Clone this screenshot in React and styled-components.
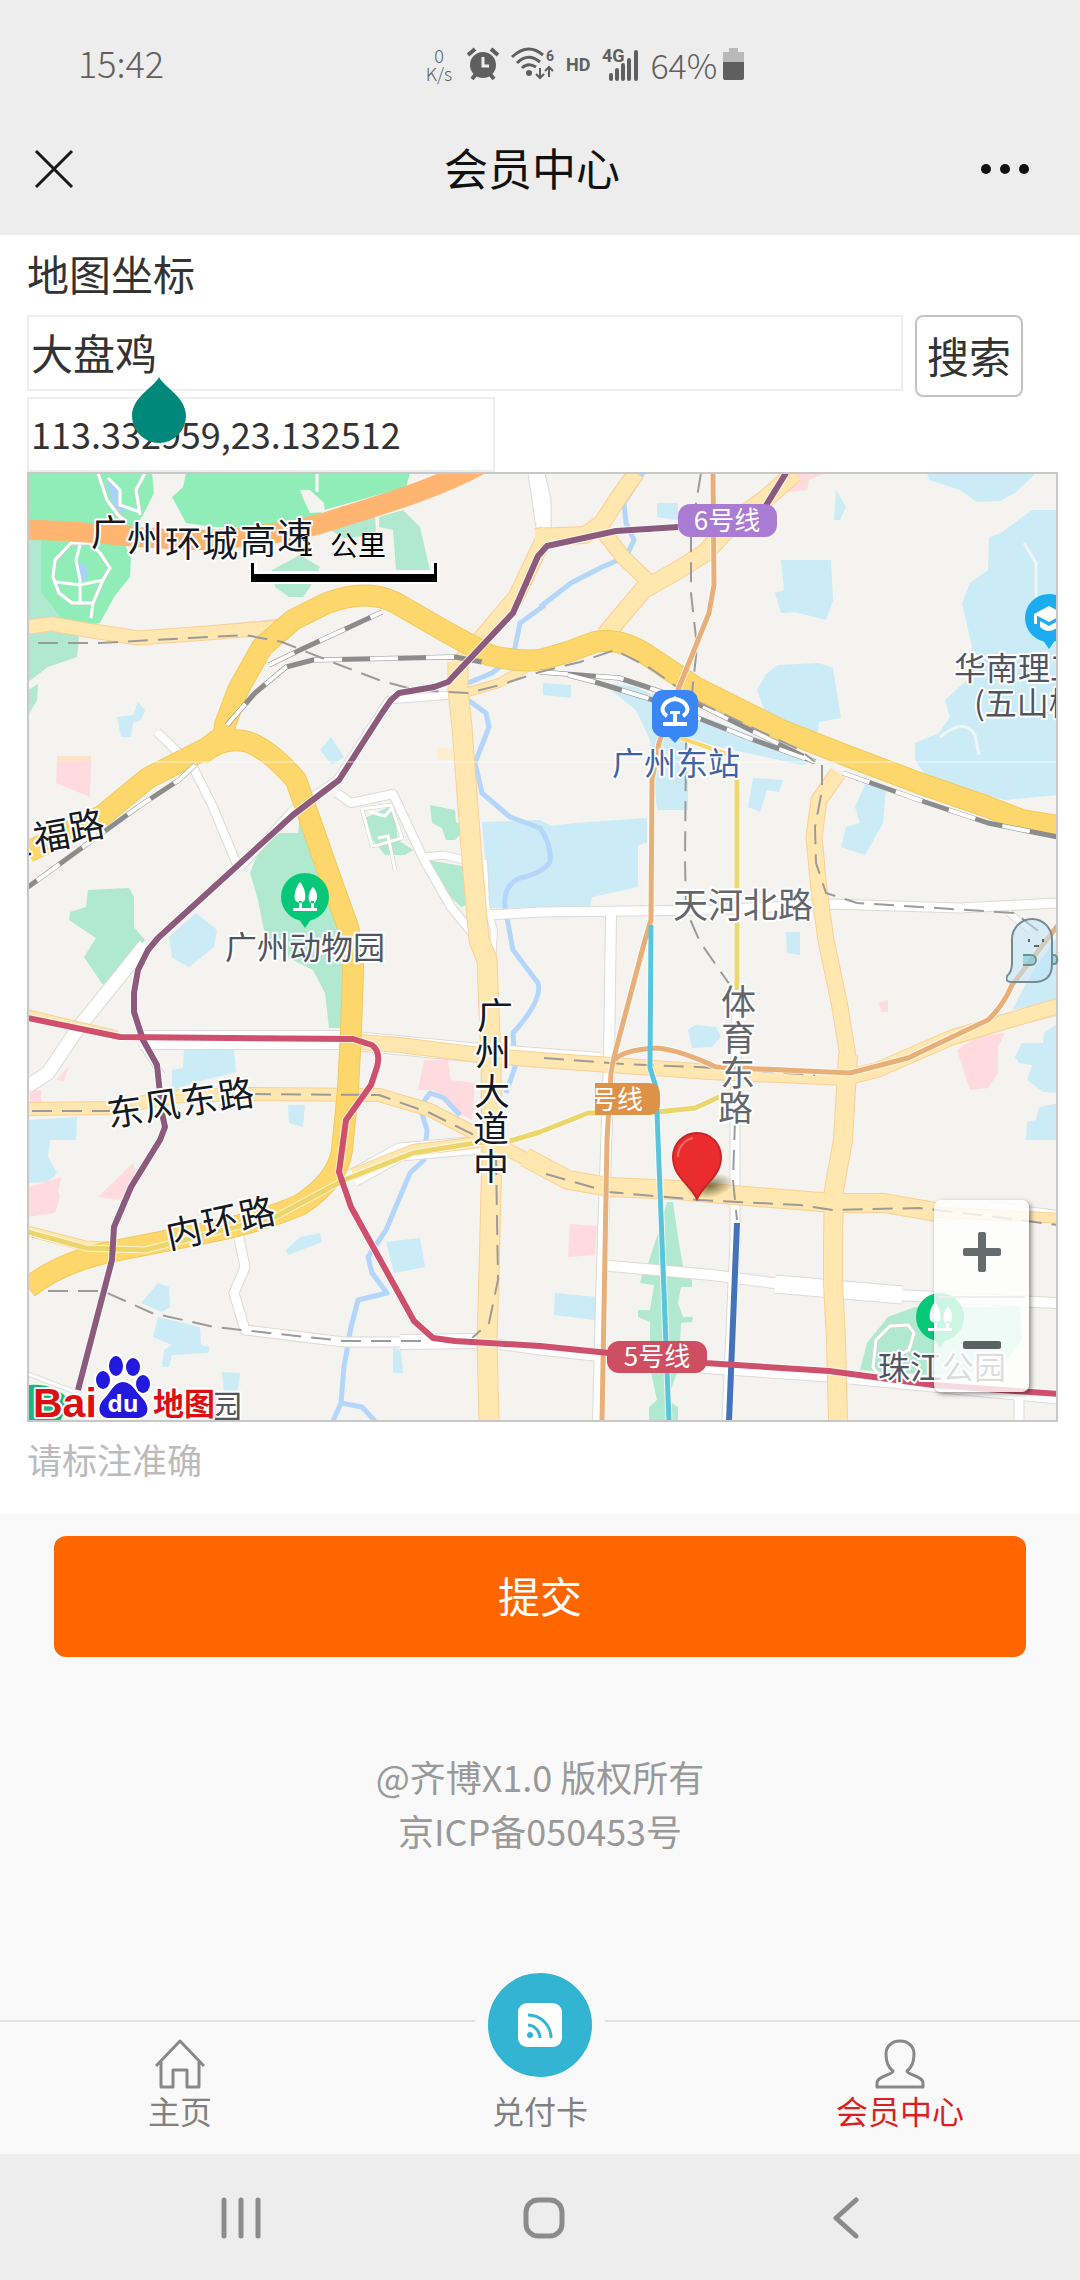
import React, { useState } from 'react'
import styled, { createGlobalStyle } from 'styled-components'

const App = () => {
    const [keyword, setKeyword] = useState('大盘鸡')
    const [point, setPoint] = useState('113.332959,23.132512')

    return (
        <>
            <GlobalStyle />
            <Page>
                <Header>
                    <StatusBar>
                        <Clock>15:42</Clock>
                        <Speed><span>0</span><span>K/s</span></Speed>
                        <AlarmIcon />
                        <WifiIcon />
                        <HdMark>HD</HdMark>
                        <SignalIcon />
                        <Battery>64%<BatteryIcon /></Battery>
                    </StatusBar>
                    <TitleBar>
                        <IconButton aria-label="关闭">
                            <svg width="40" height="40" viewBox="0 0 40 40" stroke="#181818" strokeWidth="3">
                                <path d="M2 2 L38 38 M38 2 L2 38" />
                            </svg>
                        </IconButton>
                        <Title>会员中心</Title>
                        <IconButton aria-label="更多">
                            <svg width="50" height="12" viewBox="0 0 50 12" fill="#111">
                                <circle cx="6" cy="6" r="5" />
                                <circle cx="25" cy="6" r="5" />
                                <circle cx="44" cy="6" r="5" />
                            </svg>
                        </IconButton>
                    </TitleBar>
                </Header>

                <Form>
                    <Label htmlFor="keyword">地图坐标</Label>
                    <SearchRow>
                        <KeywordBox>
                            <TextInput id="keyword" value={keyword} onChange={(e) => setKeyword(e.target.value)} />
                            <CursorHandle viewBox="0 0 54 66">
                                <path d="M27 0 C32 10 54 20 54 39 A27 27 0 0 1 0 39 C0 20 22 10 27 0Z" fill="#00897b" />
                            </CursorHandle>
                        </KeywordBox>
                        <SearchButton type="button">搜索</SearchButton>
                    </SearchRow>
                    <PointInput aria-label="坐标" value={point} onChange={(e) => setPoint(e.target.value)} />
                    <MapFrame>
                        <CityMap />
                        <ZoomControl>
                            <ZoomButton aria-label="放大">
                                <svg width="38" height="40" viewBox="0 0 38 40" fill="#666b6d">
                                    <rect x="15" y="0" width="8" height="40" rx="2" />
                                    <rect x="0" y="16" width="38" height="8" rx="2" />
                                </svg>
                            </ZoomButton>
                            <ZoomButton aria-label="缩小">
                                <svg width="38" height="40" viewBox="0 0 38 40" fill="#5c6164">
                                    <rect x="0" y="16" width="38" height="8" rx="2" />
                                </svg>
                            </ZoomButton>
                        </ZoomControl>
                        <Mascot viewBox="0 0 56 66">
                            <path d="M6 21 A20 20 0 0 1 46 21 V46 Q46 64 28 64 H5 Q-1 64 1 58 Q6 54 6 45Z" fill="#bfe4f8" fillOpacity="0.55" stroke="#788792" strokeWidth="2" />
                            <path d="M17 37 h8 a5 5 0 0 1 0 10 h-8 M47 37 h2 a4 5 0 0 1 0 9 h-2" fill="#79c9d2" fillOpacity="0.6" stroke="#6a9296" strokeWidth="2" />
                            <path d="M23 21 v3 M37 21 v3 M28 28 h5" stroke="#59666e" strokeWidth="2" />
                        </Mascot>
                    </MapFrame>
                    <Hint>请标注准确</Hint>
                </Form>

                <SubmitButton type="submit">提交</SubmitButton>
                <Copyright>
                    <p>@齐博X1.0 版权所有</p>
                    <p>京ICP备050453号</p>
                </Copyright>

                <TabBar>
                    <Tab href="#home">
                        <svg width="50" height="50" viewBox="0 0 50 50" fill="none" stroke="#888" strokeWidth="3" strokeLinejoin="round">
                            <path d="M1 27 L25 2 L49 27 M6 23 V48 H18 V31 H32 V48 H44 V23" />
                        </svg>
                        主页
                    </Tab>
                    <Tab href="#card">
                        <RoundSlot>
                            <Round>
                                <svg width="44" height="44" viewBox="0 0 44 44">
                                    <rect width="44" height="44" rx="9" fill="#fff" />
                                    <g fill="none" stroke="#32b4d2" strokeWidth="3">
                                        <path d="M10 12 A23 23 0 0 1 33 35 M10 22 A13 13 0 0 1 22 35" />
                                    </g>
                                    <circle cx="12" cy="32" r="3" fill="#32b4d2" />
                                </svg>
                            </Round>
                        </RoundSlot>
                        兑付卡
                    </Tab>
                    <Tab href="#member" $active>
                        <svg width="50" height="50" viewBox="0 0 50 50" fill="none" stroke="#888" strokeWidth="3" strokeLinejoin="round">
                            <path d="M25 2 C16 2 11 8 11 15 C11 23 14 29 18 32 C18 36 2 37 2 44 V48 H48 V44 C48 37 32 36 32 32 C36 29 39 23 39 15 C39 8 34 2 25 2Z" />
                        </svg>
                        会员中心
                    </Tab>
                </TabBar>

                <NavBar>
                    <NavButton aria-label="最近任务">
                        <svg width="40" height="42" viewBox="0 0 40 42" stroke="#8b8b8b" strokeWidth="5" strokeLinecap="round">
                            <path d="M3 3 V39 M20 3 V39 M37 3 V39" />
                        </svg>
                    </NavButton>
                    <NavButton aria-label="主屏幕">
                        <svg width="42" height="42" viewBox="0 0 42 42" fill="none" stroke="#8b8b8b" strokeWidth="5">
                            <rect x="3" y="3" width="36" height="36" rx="12" />
                        </svg>
                    </NavButton>
                    <NavButton aria-label="返回">
                        <svg width="26" height="42" viewBox="0 0 26 42" fill="none" stroke="#8b8b8b" strokeWidth="5" strokeLinecap="round" strokeLinejoin="round">
                            <path d="M23 3 L3 21 L23 39" />
                        </svg>
                    </NavButton>
                </NavBar>
            </Page>
        </>
    )
}

/* status bar icons */

const AlarmIcon = () => (
    <svg width="34" height="34" viewBox="0 0 34 34">
        <circle cx="17" cy="18" r="13" fill="#5f5f5f" />
        <path d="M2 8 L9 2 M32 8 L25 2 M6 32 L10 27 M28 32 L24 27" stroke="#5f5f5f" strokeWidth="4" />
        <path d="M17 10 V19 H23" fill="none" stroke="#ededed" strokeWidth="3" />
    </svg>
)

const WifiIcon = () => (
    <svg width="44" height="34" viewBox="0 0 44 34">
        <g fill="none" stroke="#5f5f5f" strokeWidth="3">
            <path d="M1 10 Q17 -5 32 8 M6 16 Q17 5 29 15 M11 21 Q17 15 25 20" />
            <path d="M29 21 V31 M25 27 L29 31 L33 27 M38 30 V20 M34 24 L38 20 L42 24" strokeWidth="2" />
        </g>
        <circle cx="18" cy="26" r="3" fill="#5f5f5f" />
        <IconText x="35" y="14">6</IconText>
    </svg>
)

const SignalIcon = () => (
    <svg width="38" height="34" viewBox="0 0 38 34">
        <path d="M10 28 V32 M16 23 V32 M22 18 V32 M28 13 V32 M35 5 V32" stroke="#5f5f5f" strokeWidth="4" strokeLinecap="round" />
        <IconText x="1" y="15" $size={18}>4G</IconText>
    </svg>
)

const BatteryIcon = () => (
    <svg width="22" height="34" viewBox="0 0 22 34">
        <path d="M6 1 h9 v4 h6 v11 H0 V5 h6Z" fill="#b9b9b9" />
        <path d="M0 15 h21 v16 q0 2 -2 2 H2 q-2 0 -2 -2Z" fill="#5f5f5f" />
    </svg>
)

/* map data */

const woods = [
    '28,473 152,473 154,493 143,515 124,543 131,557 130,577 114,597 100,623 72,630 62,620 41,593 41,540 28,540',
    '186,473 410,473 406,487 324,510 310,523 293,527 213,527 186,523 172,497 183,487',
]

const parks = [
    '28,540 41,540 41,593 62,620 72,630 79,637 77,657 48,667 28,682',
    '28,690 38,684 37,700 28,716',
    '379,517 403,510 420,527 430,570 396,570 393,530 379,527',
    '325,527 375,513 376,535 344,538',
    '272,570 300,555 320,567 317,573 310,587 303,597 289,597 275,587',
    '258,853 272,833 298,833 300,813 325,880 344,940 343,1028 329,1028 325,993 313,970 289,958 265,935 258,900 250,873',
    '88,890 129,888 134,897 134,927 145,940 128,960 103,985 84,957 96,938 69,920 70,912 86,907',
    '430,805 455,810 456,822 467,827 455,840 446,840 442,828 432,823',
    '427,860 468,867 472,903 461,907 444,890',
    '365,818 393,805 398,840 413,850 405,855 385,855 373,840',
    '667,1202 673,1202 678,1237 683,1267 683,1275 692,1280 692,1287 681,1287 678,1303 683,1317 693,1317 692,1322 681,1323 679,1367 667,1400 678,1407 678,1421 649,1421 649,1407 657,1400 650,1367 650,1322 638,1317 638,1310 650,1310 654,1285 640,1283 642,1275 647,1267 659,1230',
    '860,1370 867,1343 888,1317 915,1307 1020,1307 1022,1340 1000,1370 930,1375',
]

const campuses = [
    '482,822 540,820 552,826 575,823 647,818 647,843 638,845 638,887 592,897 590,907 489,908',
    '602,683 636,687 678,707 815,760 802,765 688,740 688,810 657,810 650,740 636,710',
    '781,560 831,560 833,600 826,620 795,612 781,613 775,593 784,590',
    '778,665 819,663 833,668 841,718 819,722 817,743 795,737 760,717 764,710 757,690 766,674',
    '927,473 1036,473 1015,493 1000,501 977,502 960,490 929,480',
    '1032,510 1058,510 1058,795 1005,800 929,780 915,760 915,743 939,733 950,717 945,700 967,680 972,647 962,603 970,583 988,570 989,537 1001,533',
    '753,778 783,780 779,792 767,790 760,812 748,807',
    '867,780 886,790 883,823 865,855 841,847 846,827 860,823 855,807',
    '836,490 846,507 840,520 834,520',
    '657,503 678,503 678,520 657,517',
    '543,683 571,685 571,698 543,695',
    '117,717 133,715 138,702 145,710 141,720 133,723 131,737 121,737',
    '320,750 331,737 344,757 332,765',
    '169,937 196,913 217,930 214,947 189,967 172,958',
    '184,1050 234,1048 236,1072 193,1083 172,1090 172,1070 183,1068',
    '28,1120 77,1117 76,1140 50,1140 48,1157 57,1173 48,1182 28,1183',
    '288,1105 305,1105 303,1127 289,1123',
    '286,1250 300,1237 320,1233 322,1242 288,1255',
    '386,1242 420,1238 425,1267 394,1273',
    '141,1303 158,1283 169,1287 170,1307 162,1312',
    '158,1317 200,1327 201,1345 210,1347 208,1353 172,1355 169,1367 162,1367 164,1350 172,1345 153,1337',
    '222,1372 240,1373 238,1390 224,1392',
    '393,1348 401,1350 403,1373 393,1373',
    '688,1030 695,1025 716,1027 721,1037 712,1047 692,1048',
    '786,932 800,932 800,955 787,953',
    '555,1293 597,1297 595,1320 554,1315',
    '1058,1023 1044,1033 1043,1043 1022,1043 1015,1057 1019,1063 1032,1065 1027,1080 1043,1092 1058,1093',
    '1058,1103 1039,1107 1036,1120 1027,1122 1026,1140 1058,1140',
    '1058,935 1032,973 1012,1010 1058,1000',
]

const hospitals = [
    '57,762 91,762 90,797 56,783',
    '424,1060 448,1060 451,1080 475,1083 472,1120 451,1110 434,1090 418,1090',
    '28,1187 62,1177 58,1190 60,1197 55,1213 28,1217',
    '98,1197 133,1163 138,1177 120,1200',
    '30,1090 41,1090 41,1102 30,1102',
    '56,1080 69,1066 64,1081',
    '570,1224 597,1226 595,1255 568,1257',
    '957,1050 977,1037 1005,1033 998,1047 998,1073 988,1088 970,1090',
    '879,1003 888,1000 888,1012 881,1012',
    '795,473 826,473 809,480 807,490 781,493',
]

const rivers = [
    'M545,605 L520,623 L513,657 L492,673 L468,683',
    'M643,473 L624,503 L626,523 L634,540 L626,557 L602,567 L571,583 L540,607',
    'M468,700 L486,713 L489,727 L475,763 L482,793 L510,817 L540,828 Q552,845 550,862 Q543,873 520,878 Q503,885 505,907 L513,950 L538,983 Q543,1000 513,1033 L515,1067 L506,1093',
    'M460,1115 L444,1098 L430,1093 L420,1107 L427,1130 L424,1160 L410,1173 L386,1230 L368,1257 L372,1273 L387,1293 L358,1300 L351,1327 L344,1367 L341,1403 L333,1421',
    'M341,1403 L362,1407 L375,1421',
]

const streets = [
    { w: 8, d: 'M157,732 L193,767 L213,807 L238,867' },
    { w: 8, d: 'M337,793 L351,803 L393,794 L424,860 L451,907 L478,940' },
    { w: 7, d: 'M241,867 L293,810 L337,780 L389,700 L451,695' },
    { w: 7, d: 'M424,857 L444,855 L472,862' },
    { w: 5, d: 'M200,630 L282,622' },
    { w: 6, d: 'M484,860 L486,905 L494,930 L490,1000' },
    { w: 9, d: 'M490,915 L540,912 L712,910 L830,904 L960,908 L1058,903' },
    { w: 6, d: 'M1008,912 L1030,930' },
    { w: 10, d: 'M611,913 L609,1060 L605,1180 L602,1265 L598,1421' },
    { w: 9, d: 'M737,990 L735,1120 L735,1240 L727,1421' },
    { w: 10, d: 'M599,1265 L712,1275 L781,1284' },
    { w: 17, d: 'M775,1284 L902,1295' },
    { w: 10, d: 'M895,1295 L1058,1303' },
    { w: 9, d: 'M238,1233 L245,1267 L234,1293 L245,1330 L344,1342 L413,1342' },
    { w: 14, d: 'M400,1342 L475,1341' },
    { w: 9, d: 'M475,1341 L540,1350 L712,1369 L829,1377 L1058,1399' },
    { w: 13, d: 'M28,1086 L48,1073 L79,1027 L145,945' },
    { w: 18, d: 'M140,1040 L344,1040 L480,1053 L600,1062' },
    { w: 5, d: 'M141,1043 L162,1075' },
    { w: 9, d: 'M1019,1395 V1421' },
    { w: 9, d: 'M1000,1024 L1058,1010' },
    { w: 17, d: 'M353,1178 L400,1152 L480,1145' },
    { w: 12, d: 'M990,1208 L1058,1217' },
    { w: 3, d: 'M28,1374 L75,1392' },
]

const avenues = [
    { w: 13, d: 'M28,627 L52,624 L86,630 L138,638 L207,633 L282,627' },
    { w: 15, d: 'M548,530 L516,597 L482,637 L458,665' },
    { w: 19, d: 'M458,662 V690 L462,727 L472,860 L479,940 L487,960 L491,1060 L492,1153 L489,1273 L487,1340 L489,1421' },
    { w: 8, d: 'M468,692 L499,683 L517,673 L545,657' },
    { w: 16, d: 'M535,537 L585,535 L602,523 L619,497 L636,473' },
    { w: 14, d: 'M602,530 L623,557 L647,580' },
    { w: 17, d: 'M605,635 L643,590 L678,570 L705,553 L733,523 L764,500 L795,473' },
    { w: 15, d: 'M838,773 L819,800 L814,837 L819,890 L826,940 L840,1007 L848,1057' },
    { w: 18, d: 'M848,1055 L843,1140 L834,1190 L833,1240 V1283 L836,1340 L838,1421' },
    { w: 14, d: 'M360,1042 L400,1045 L480,1055 L540,1060 L710,1072 L845,1078 L877,1070 L953,1037 L1058,1006' },
    { w: 7, d: 'M28,1014 L117,1035' },
    { w: 12, d: 'M28,1109 L110,1108 L180,1096 L251,1094 L379,1095 L430,1110 L482,1137 L540,1166' },
    { w: 18, d: 'M525,1157 L568,1180 L609,1187 L678,1190 L733,1195 L833,1203 L884,1203 L936,1212' },
    { w: 9, d: 'M930,1212 L1058,1218' },
    { w: 9, d: 'M28,1231 L86,1246 L145,1249' },
    { w: 10, d: 'M353,1174 L413,1150 L480,1142' },
]

const highways = [
    'M28,852 L103,815 L148,778 L207,748 L224,735 L225,725 L238,690 L262,647 L293,620 L327,603 Q368,588 396,603 L448,633 L489,655 Q515,662 540,660 L568,652 L595,642 Q622,637 650,657 L695,687 L781,730 L850,757 L919,783 L988,807 L1022,820 L1058,826',
    'M200,755 Q224,735 248,742 Q270,750 296,780 L310,820 L330,877 L348,927 Q354,950 353,975 L351,1030 L348,1090 Q345,1120 342,1150 Q338,1180 300,1205 Q260,1222 210,1232 L155,1243 L114,1251 Q60,1262 28,1288',
]

const railways = [
    'M269,665 L300,650 L382,612',
    'M227,725 L255,693 L286,667 L313,660 L455,657 L482,662',
    'M540,672 L619,678 L647,687 L700,705 L815,762',
    'M568,675 L595,682 L647,698 L698,718 L754,740 L815,762',
    'M843,773 L919,800 L988,823 L1058,837',
    'M195,765 L179,780 L138,807 L28,887',
]

const planned = [
    'M38,643 L100,643 L190,638 L245,635 L282,642 L337,664 L379,680 L415,690 L468,693 L500,685 L540,672 L580,662 L615,650 L650,668 L700,703 L800,750 L815,762',
    'M822,765 V790 L815,827 L816,863 L826,893 L857,903 L1015,913 L1046,937',
    'M701,473 L691,533 V593 L697,647 L692,693 L686,743 L685,860 L686,910 L700,942 L730,985',
    'M735,1120 L733,1180 L737,1220',
    'M32,1111 H110 M251,1094 L379,1095 L430,1113 L482,1139 M546,1174 L609,1192 L700,1200 L800,1205 L833,1210 L919,1208 L980,1215 L1058,1225',
    'M544,1058 L623,1064 L698,1067 L815,1075',
    'M48,1291 H103 L152,1313 L214,1327 L344,1341 H430',
    'M496,1155 L498,1280 L489,1323 L472,1338',
]

const metros = [
    { c: '#ecd870', w: 5, d: 'M737,780 V990' },
    { c: '#fdd76b', w: 4, d: 'M681,738 L730,755' },
    { c: '#ecd56a', w: 5, d: 'M28,1232 L86,1248 L145,1250 L275,1217 L344,1180 L413,1153 L475,1143 L510,1141 L540,1132 L588,1113 L657,1112 L695,1108 L730,1092' },
    { c: '#e8b078', w: 5, d: 'M713,473 L714,585 L709,613 L678,690 L659,743 L652,780 L651,920 L645,940 L614,1057 L611,1073 L607,1140 L602,1421' },
    { c: '#e8b078', w: 5, d: 'M615,1060 Q622,1050 657,1048 Q680,1050 716,1067 L850,1073 L908,1058 L988,1020 Q1003,1006 1012,985 L1058,925' },
    { c: '#5bc4dd', w: 5, d: 'M651,925 L650,1068 L656,1087 L669,1421' },
    { c: '#4573b9', w: 6, d: 'M737,1223 L729,1421' },
    { c: '#8c5a7c', w: 6, d: 'M786,473 L762,512 M678,527 L616,531 L547,546 L538,556 L513,613 L448,682 L434,687 L399,693 L391,700 L382,713 L339,780 L293,815 L158,938 L148,950 L138,970 L134,993 V1012 L143,1040 L157,1065 L162,1113 L165,1127 L160,1140 L131,1187 L114,1227 L112,1260 L78,1390' },
    { c: '#cf506d', w: 6, d: 'M28,1018 L120,1037 L353,1039 L372,1045 Q381,1052 377,1067 L371,1085 L346,1120 L339,1172 L351,1207 L414,1321 L433,1338 L455,1341 L540,1346 L609,1353 L705,1363 L829,1371 L933,1385 L1058,1394' },
]

const Roads = ({ roads, edge, fill }) => (
    <g fill="none" strokeLinejoin="round">
        {roads.map((r) => <path key={r.d} d={r.d} stroke={edge} strokeWidth={r.w + 2} />)}
        {roads.map((r) => <path key={r.d} d={r.d} stroke={fill} strokeWidth={r.w} />)}
    </g>
)

const TreePin = ({ x, y }) => (
    <g transform={`translate(${x} ${y})`}>
        <path d="M-7 21 L0 31 L7 21Z" fill="#07c879" />
        <circle r="24" fill="#07c879" />
        <path d="M-5 -15 C-10 -9 -11 -2 -10 3 Q-5 9 0 3 C1 -2 0 -9 -5 -15Z M8 -10 C4 -6 3 0 4 4 Q8 9 11 4 C13 0 12 -6 8 -10Z M-12 11 H12 V14 H-12Z M-6 4 h3 v8 h-3Z M6 4 h3 v8 h-3Z" fill="#fff" />
    </g>
)

const CityMap = () => (
    <MapSvg viewBox="29 474 1027 946" role="img" aria-label="地图">
        <rect x="28" y="473" width="1030" height="949" fill="#f4f3ef" />
        {woods.map((p) => <polygon key={p} points={p} fill="#90edb8" />)}
        {parks.map((p) => <polygon key={p} points={p} fill="#b0e8d0" />)}
        <polygon points="300,490 310,490 324,503 325,512 310,513 303,498" fill="#f4f3ef" />
        {campuses.map((p) => <polygon key={p} points={p} fill="#cbebf6" />)}
        {hospitals.map((p) => <polygon key={p} points={p} fill="#ffdbe0" />)}
        <rect x="57" y="756" width="34" height="6" fill="#ffe3c6" />
        <rect x="437" y="748" width="16" height="12" fill="#ffedd0" />
        <polygon points="528,473 545,473 551,500 551,528 536,528" fill="#fff" stroke="#dcdad6" />

        {/* garden paths and ponds */}
        <path d="M105,478 L117,487 L125,513 L115,510Z M77,563 h8 l3,12 l-4,7 h-7Z" fill="#a9d2f4" />
        <g fill="none" stroke="#cfcfcb" strokeWidth="4" strokeLinejoin="round">
            <path d="M71,543 L55,560 L53,577 L59,593 L72,603 H93 L103,580 L110,568 L100,553 L90,543Z M98,473 L107,500 L124,520 M145,473 L136,490 L140,515" />
            <path d="M362,809 L391,805 L402,838 L378,845 L372,846Z M388,836 L395,870" />
            <path d="M885,1385 L873,1367 L876,1340 L890,1326 L908,1325 L914,1333 L909,1350 L890,1360" />
        </g>
        <g fill="none" stroke="#fff" strokeWidth="3">
            <path d="M98,473 L107,500 L118,515 L124,520 M145,473 L136,490 L140,515 M140,512 L120,505 V490 L108,478" />
            <path d="M71,543 L55,560 L53,577 L59,593 L72,603 H93 L103,580 L110,568 L100,553 L90,543Z M80,545 L76,560 L80,580 V603 M56,582 L80,585 L103,580 M93,603 L91,618 M317,473 V492" />
            <path d="M362,809 L391,805 L402,838 L378,845 L372,846Z M370,812 L385,816 L392,808 M378,838 L388,836 L395,870" />
            <path d="M885,1385 L873,1367 L876,1340 L890,1326 L908,1325 L914,1333 L909,1350 L890,1360" />
            <path d="M1024,543 L1036,563 V620 M940,737 Q965,717 975,735 L979,755" stroke="#eef6f6" />
        </g>

        <g fill="none" stroke="#b5d6fb" strokeWidth="5" strokeLinejoin="round">
            {rivers.map((d) => <path key={d} d={d} />)}
        </g>
        <Roads roads={streets} edge="#dcdad8" fill="#fff" />
        <Roads roads={avenues} edge="#fbcf94" fill="#ffe7af" />

        <path d="M28,530 C90,530 140,540 200,540 C245,538 290,532 320,524 C380,505 440,488 485,462" fill="none" stroke="#ffb470" strokeWidth="20" />
        <g fill="none" strokeLinejoin="round">
            {highways.map((d) => <path key={d} d={d} stroke="#f2c95c" strokeWidth="22" />)}
            {highways.map((d) => <path key={d} d={d} stroke="#fdd76b" strokeWidth="20" />)}
            {railways.map((d) => <path key={d} d={d} stroke="#8c8c8c" strokeWidth="5" />)}
            {railways.map((d) => <path key={d} d={d} stroke="#fff" strokeWidth="4" strokeDasharray="28 28" />)}
            {planned.map((d) => <path key={d} d={d} stroke="#9b9b9b" strokeWidth="2" strokeDasharray="20 10" />)}
            {metros.map((m) => <path key={m.d} d={m.d} stroke="#fff" strokeOpacity="0.7" strokeWidth={m.w + 2} />)}
            {metros.map((m) => <path key={m.d} d={m.d} stroke={m.c} strokeWidth={m.w} />)}
        </g>
        <path d="M148,762 H1058" stroke="#fff" strokeOpacity="0.7" />

        {/* metro badges */}
        <rect x="678" y="504" width="99" height="33" rx="12" fill="#a97bd2" />
        <BadgeText x="727" y="530">6号线</BadgeText>
        <rect x="607" y="1341" width="100" height="32" rx="12" fill="#cf4f62" />
        <BadgeText x="657" y="1366">5号线</BadgeText>
        <path d="M595,1083 H648 Q660,1083 660,1095 V1103 Q660,1115 648,1115 H595Z" fill="#de9247" />
        <svg x="595" y="1083" width="65" height="32">
            <BadgeText x="22" y="26">号线</BadgeText>
        </svg>

        {/* road names */}
        <RoadName x="91 127 165 202 240 277" y="546 552 557 557 554 549">广州环城高速</RoadName>
        <RoadName x="-3 36 71" y="860 852 842" rotate="-10">恒福路</RoadName>
        <RoadName x="109 146 183 220" y="1127 1121 1115 1110" rotate="-8">东风东路</RoadName>
        <RoadName x="169 205 242" y="1249 1238 1230" rotate="-12">内环路</RoadName>
        <RoadName x="477 475 474 473 473" y="1029 1066 1105 1142 1180">广州大道中</RoadName>
        <StreetName x="673" y="918">天河北路</StreetName>
        <StreetName x="721 721 720 718" y="1015 1051 1086 1121">体育东路</StreetName>

        {/* places */}
        <PlaceName x="225" y="959">广州动物园</PlaceName>
        <PlaceName x="612" y="775" $color="#3f62a6">广州东站</PlaceName>
        <PlaceName x="954" y="680">华南理工大学</PlaceName>
        <PlaceName x="974" y="715">(五山校区)</PlaceName>
        <PlaceName x="878" y="1379">珠江公园</PlaceName>
        <PlaceName x="210" y="1418">园</PlaceName>
        <TreePin x={305} y={897} />
        <TreePin x={940} y={1317} />
        <g transform="translate(1049 618)">
            <path d="M-7 21 L0 31 L7 21Z" fill="#1badef" />
            <circle r="24" fill="#1badef" />
            <path d="M-15 -4 L0 -12 L15 -4 L0 4Z M-9 3 L0 8 L9 3 V9 Q0 17 -9 9Z M-15 -4 h3 v10 h-3Z" fill="#fff" />
        </g>
        <g transform="translate(652 690)">
            <path d="M15 45 L23 53 L30 45Z" fill="#3b86f7" />
            <rect width="46" height="47" rx="11" fill="#3b86f7" />
            <path d="M15 26 Q9 22 11 17 Q14 10 23 9 Q32 10 35 17 Q37 22 31 26" fill="none" stroke="#fff" strokeWidth="4" />
            <path d="M19 9 L23 6 L27 9Z M18 21 H28 V24 H25 V32 H35 V36 H11 V32 H21 V24 H18Z" fill="#fff" />
        </g>

        {/* selected point */}
        <defs>
            <radialGradient id="shade">
                <stop offset="0" stopColor="#6d6436" stopOpacity="0.9" />
                <stop offset="1" stopColor="#6d6436" stopOpacity="0" />
            </radialGradient>
        </defs>
        <ellipse cx="710" cy="1186" rx="24" ry="12" fill="url(#shade)" transform="rotate(-12 710 1186)" />
        <path d="M697 1199 C690 1184 673 1177 673 1157 A24 24 0 0 1 721 1157 C721 1177 703 1184 697 1199Z" fill="#ea2c2e" stroke="#c92427" strokeWidth="2" />
        <path d="M678 1157 A19 19 0 0 1 693 1138" fill="none" stroke="#f46a6a" strokeWidth="2" />

        {/* scale */}
        <ScaleText x="298" y="556">1</ScaleText>
        <ScaleText x="330" y="556">公里</ScaleText>
        <path d="M249 561 H257 V571 H431 V561 H440 V584 H249Z" fill="#fff" />
        <path d="M251 563 H254 V574 H434 V563 H437 V582 H251Z" fill="#000" />

        {/* provider logo */}
        <path d="M28 1385 Q58 1383 70 1402 L60 1421 H28Z" fill="#10bb7b" />
        <LogoText x="33" y="1417" $size={41}>Bai</LogoText>
        <g fill="#2319dc" stroke="#fff" strokeWidth="4" paintOrder="stroke">
            <path d="M123 1382 C132 1382 136 1392 143 1399 C150 1407 149 1417 138 1418 H108 C98 1417 97 1406 104 1399 C111 1392 114 1382 123 1382Z" />
            <ellipse cx="103" cy="1380" rx="7" ry="9" />
            <ellipse cx="116" cy="1366" rx="7" ry="10" />
            <ellipse cx="133" cy="1367" rx="7" ry="9" />
            <ellipse cx="143" cy="1384" rx="7" ry="9" />
        </g>
        <PawText x="123" y="1412">du</PawText>
        <LogoText x="153" y="1415" $size={31}>地图</LogoText>
    </MapSvg>
)

const sans = `'Noto Sans CJK SC', 'Noto Sans', sans-serif`

const GlobalStyle = createGlobalStyle`
    *{
        box-sizing: border-box;
        margin: 0;
    }
    body{
        background: #f9f9f9;
        color: #333;
        font-family: ${sans};
    }
    button, input{
        font-family: inherit;
        font-weight: inherit;
        color: inherit;
    }
    svg{
        display: block;
        flex: none;
    }
`

const Page = styled.div`
    min-height: 100vh;
    display: flex;
    flex-direction: column;
`

const Header = styled.header`
    background: #ededed;
    padding-bottom: 25px;
`

const StatusBar = styled.div`
    height: 128px;
    padding-left: 78px;
    display: flex;
    align-items: center;
    gap: 11px;
    font-weight: 300;
    color: #5f5f5f;
`

const Clock = styled.time`
    width: 334px;
    padding-bottom: 4px;
    font-size: 36px;
`

const Speed = styled.div`
    width: 32px;
    display: flex;
    flex-direction: column;
    align-items: center;
    font-size: 18px;
    line-height: 18px;
`

const HdMark = styled.span`
    font: 700 18px Roboto, sans-serif;
`

const IconText = styled.text`
    font: 700 ${(p) => p.$size || 14}px Roboto, sans-serif;
    fill: #5f5f5f;
`

const Battery = styled.div`
    display: flex;
    align-items: center;
    gap: 6px;
    font-size: 34px;
`

const TitleBar = styled.div`
    height: 82px;
    padding: 0 50px 0 34px;
    display: grid;
    grid-template-columns: 1fr auto 1fr;
    align-items: center;

    button:last-child{
        justify-self: end;
    }
`

const Title = styled.h1`
    padding-bottom: 4px;
    font-size: 44px;
    font-weight: 400;
    color: #111;
`

const IconButton = styled.button`
    justify-self: start;
    padding: 0;
    border: 0;
    background: none;
    cursor: pointer;
`

const Form = styled.form`
    padding: 0 22px 18px 27px;
    background: #fff;
`

const Label = styled.label`
    display: block;
    padding-bottom: 4px;
    font-size: 42px;
    line-height: 76px;
`

const SearchRow = styled.div`
    display: flex;
    align-items: flex-start;
    gap: 12px;
    padding-right: 35px;
`

const KeywordBox = styled.div`
    position: relative;
    flex: 1;
`

const TextInput = styled.input`
    display: block;
    width: 100%;
    height: 76px;
    padding: 0 4px 4px 2px;
    border: 2px solid #eee;
    background: #fff;
    font-size: 42px;
    outline: none;
`

const PointInput = styled(TextInput)`
    width: 468px;
    height: 75px;
    font-size: 36px;
`

/* hangs under the caret, over the next field */
const CursorHandle = styled.svg`
    position: absolute;
    top: 62px;
    left: 105px;
    width: 54px;
    z-index: 1;
`

const SearchButton = styled.button`
    width: 108px;
    height: 82px;
    padding: 0 0 4px;
    border: 2px solid #c4c4c4;
    border-radius: 8px;
    background: #fff;
    font-size: 42px;
`

const MapFrame = styled.div`
    position: relative;
    border: 2px solid #c8c8c8;
`

const MapSvg = styled.svg`
    width: 100%;
    height: auto;
    overflow: hidden;
`

const MapText = styled.text`
    font-family: ${sans};
    font-weight: 400;
    stroke: #fff;
    stroke-width: 4px;
    stroke-linejoin: round;
    paint-order: stroke;
`

const RoadName = styled(MapText)`
    font-size: 36px;
    fill: #16191f;
`

const StreetName = styled(MapText)`
    font-size: 35px;
    fill: #63666b;
`

const PlaceName = styled(MapText)`
    font-size: 32px;
    fill: ${(p) => p.$color || '#50555f'};
`

const ScaleText = styled(MapText)`
    font-size: 28px;
    fill: #000;
    stroke-width: 1px;
`

const BadgeText = styled.text`
    font: 400 26px ${sans};
    fill: #fff;
    text-anchor: middle;
`

const LogoText = styled(MapText)`
    font-family: 'Liberation Sans', ${sans};
    font-size: ${(p) => p.$size}px;
    font-weight: 700;
    fill: #dc0f12;
`

const PawText = styled.text`
    font: 700 24px 'Open Sans', sans-serif;
    fill: #fff;
    text-anchor: middle;
`

const ZoomControl = styled.div`
    position: absolute;
    right: 27px;
    bottom: 28px;
    width: 95px;
    padding: 0 4px;
    border-radius: 7px;
    background: rgba(255, 255, 255, 0.8);
    box-shadow: 2px 2px 5px rgba(0, 0, 0, 0.45);
`

const ZoomButton = styled.button`
    display: flex;
    align-items: center;
    justify-content: center;
    width: 100%;
    height: 96px;
    padding: 8px 0 0;
    border: 0;
    background: none;

    & + &{
        padding: 0;
        border-top: 2px solid #eee;
    }
`

const Mascot = styled.svg`
    position: absolute;
    top: 444px;
    right: -6px;
    width: 56px;
`

const Hint = styled.p`
    font-size: 35px;
    line-height: 74px;
    color: #bbb;
`

const SubmitButton = styled.button`
    height: 121px;
    margin: 22px 54px 0;
    padding: 0 0 4px;
    border: 0;
    border-radius: 12px;
    background: #f60;
    color: #fff;
    font-size: 42px;
`

const Copyright = styled.footer`
    margin: 92px 0;
    text-align: center;
    font-size: 36px;
    line-height: 54px;
    color: #999;
`

const TabBar = styled.nav`
    display: flex;
    height: 134px;
    margin-top: auto;
    border-top: 2px solid #e4e4e4;
    background: #f9f9f9;
`

const Tab = styled.a`
    flex: 1;
    display: flex;
    flex-direction: column;
    align-items: center;
    padding-top: 17px;
    font-size: 32px;
    line-height: 42px;
    text-decoration: none;
    color: ${(p) => (p.$active ? '#dd1f1f' : '#808080')};
`

const RoundSlot = styled.span`
    position: relative;
    width: 130px;
    height: 50px;
`

/* rises over the bar's top line */
const Round = styled.span`
    position: absolute;
    left: 0;
    bottom: -1px;
    width: 130px;
    height: 130px;
    display: flex;
    align-items: center;
    justify-content: center;
    border: 13px solid #f9f9f9;
    border-radius: 50%;
    background: #32b4d2;
`

const NavBar = styled.div`
    height: 126px;
    padding: 2px 213px 0 220px;
    display: flex;
    align-items: center;
    justify-content: space-between;
    background: #ededed;
`

const NavButton = styled(IconButton)`
    display: flex;
    justify-content: center;
    width: 42px;
`

export default App
